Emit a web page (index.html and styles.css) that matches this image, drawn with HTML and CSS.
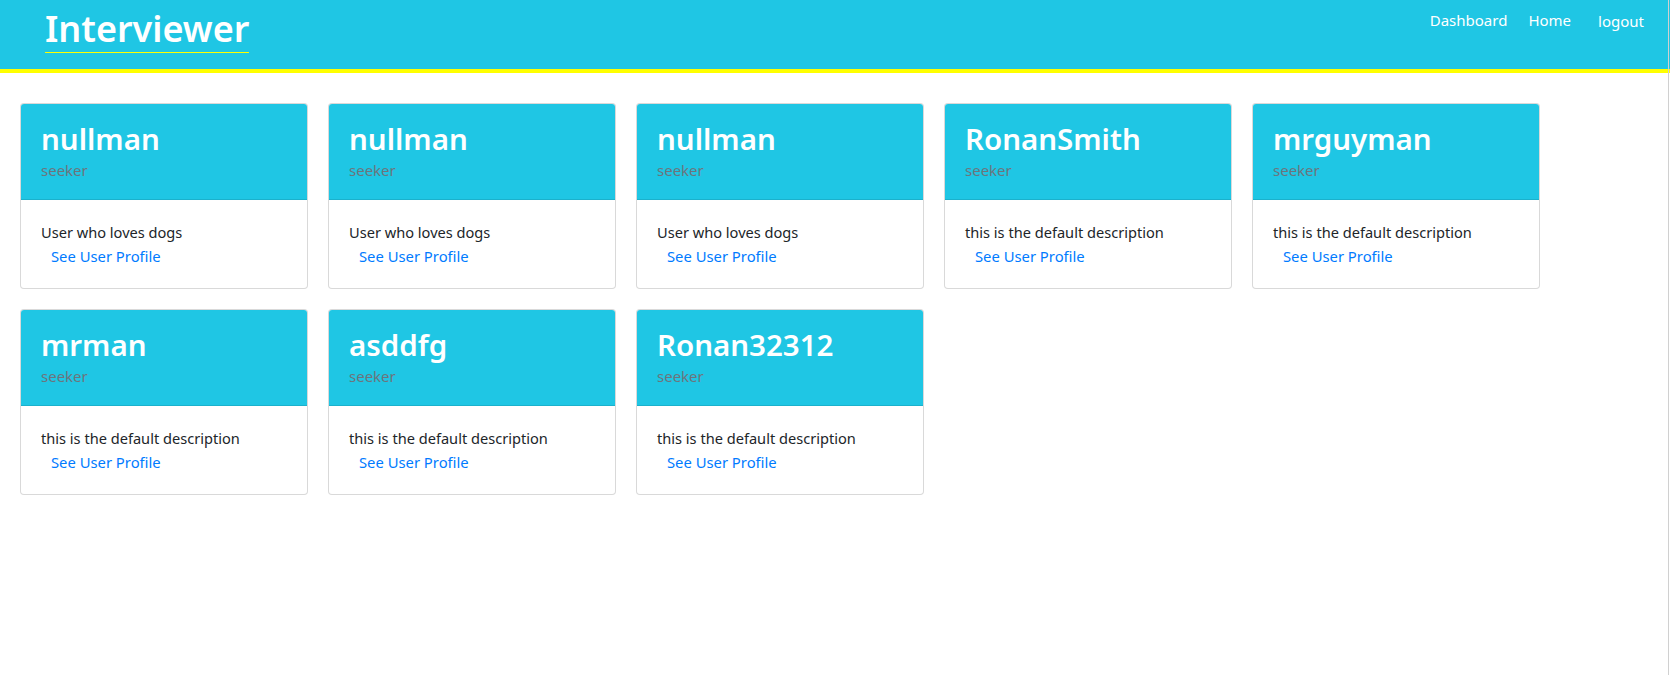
FILE: index.html
```html
<!DOCTYPE html>
<html lang="en">
<head>
<meta charset="utf-8">
<title>Interviewer</title>
<link rel="stylesheet" href="styles.css">
</head>
<body>
<header class="topbar">
  <a class="brand" href="#">Interviewer</a>
  <nav class="nav">
    <a class="nav-link nav-dash" href="#">Dashboard</a>
    <a class="nav-link nav-home" href="#">Home</a>
    <a class="nav-link nav-logout" href="#">logout</a>
  </nav>
</header>
<main class="cards">
  <div class="card">
    <div class="card-header"><h2 class="card-title">nullman</h2><div class="card-subtitle">seeker</div></div>
    <div class="card-body"><p class="card-text">User who loves dogs</p><a class="card-link" href="#">See User Profile</a></div>
  </div>
  <div class="card">
    <div class="card-header"><h2 class="card-title">nullman</h2><div class="card-subtitle">seeker</div></div>
    <div class="card-body"><p class="card-text">User who loves dogs</p><a class="card-link" href="#">See User Profile</a></div>
  </div>
  <div class="card">
    <div class="card-header"><h2 class="card-title">nullman</h2><div class="card-subtitle">seeker</div></div>
    <div class="card-body"><p class="card-text">User who loves dogs</p><a class="card-link" href="#">See User Profile</a></div>
  </div>
  <div class="card">
    <div class="card-header"><h2 class="card-title">RonanSmith</h2><div class="card-subtitle">seeker</div></div>
    <div class="card-body"><p class="card-text">this is the default description</p><a class="card-link" href="#">See User Profile</a></div>
  </div>
  <div class="card">
    <div class="card-header"><h2 class="card-title">mrguyman</h2><div class="card-subtitle">seeker</div></div>
    <div class="card-body"><p class="card-text">this is the default description</p><a class="card-link" href="#">See User Profile</a></div>
  </div>
  <div class="card">
    <div class="card-header"><h2 class="card-title">mrman</h2><div class="card-subtitle">seeker</div></div>
    <div class="card-body"><p class="card-text">this is the default description</p><a class="card-link" href="#">See User Profile</a></div>
  </div>
  <div class="card">
    <div class="card-header"><h2 class="card-title">asddfg</h2><div class="card-subtitle">seeker</div></div>
    <div class="card-body"><p class="card-text">this is the default description</p><a class="card-link" href="#">See User Profile</a></div>
  </div>
  <div class="card">
    <div class="card-header"><h2 class="card-title">Ronan32312</h2><div class="card-subtitle">seeker</div></div>
    <div class="card-body"><p class="card-text">this is the default description</p><a class="card-link" href="#">See User Profile</a></div>
  </div>
</main>
<div class="edge"></div>
</body>
</html>
```
FILE: styles.css
```css
* { box-sizing: border-box; }
html, body { margin: 0; padding: 0; }
body {
  font-family: "Noto Sans", "Open Sans", "Liberation Sans", sans-serif;
  font-size: 14.6px;
  line-height: 24px;
  color: #212529;
  background: #fff;
  width: 1670px;
  height: 675px;
  overflow: hidden;
}
.topbar {
  height: 73px;
  background: #1fc6e4;
  border-bottom: 4px solid #ffff00;
  display: flex;
  justify-content: space-between;
  align-items: flex-start;
  padding-right: 26px;
}
.brand {
  margin-left: 45px;
  margin-top: 6px;
  font-size: 36px;
  line-height: 46px;
  font-weight: 600;
  color: #fff;
  text-decoration: none;
  border-bottom: 1px solid #ffff00;
}
.nav {
  display: flex;
  padding-top: 8px;
}
.nav-link {
  color: #fff;
  text-decoration: none;
  font-size: 15px;
  line-height: 24px;
}
.nav-home { margin-left: 21px; }
.nav-logout { margin-left: 27px; padding-top: 1px; }
.cards {
  display: flex;
  flex-wrap: wrap;
  align-items: flex-start;
  padding: 20px 10px;
}
.card {
  width: 288px;
  margin: 10px;
  border: 1px solid rgba(0,0,0,.15);
  border-radius: 4px;
  overflow: hidden;
  background: #fff;
}
.card-header {
  background: #1fc6e4;
  border-bottom: 1px solid rgba(0,0,0,.1);
  padding: 16px 20px 17px;
}
.card-title {
  margin: 0;
  font-size: 29.5px;
  line-height: 38px;
  font-weight: 600;
  color: #fff;
}
.card-subtitle {
  color: #6c757d;
  font-size: 15px;
  line-height: 24px;
}
.card-body {
  padding: 20px 20px 20px;
  height: 88px;
}
.card-text {
  margin: 0;
  font-size: 14.6px;
  line-height: 24px;
}
.card-link {
  display: inline-block;
  padding-left: 10px;
  color: #007bff;
  text-decoration: none;
  font-size: 14.8px;
  line-height: 24px;
}
.edge {
  position: fixed;
  top: 0;
  right: 1px;
  width: 1px;
  height: 675px;
  background: #d0d0d0;
}
```
